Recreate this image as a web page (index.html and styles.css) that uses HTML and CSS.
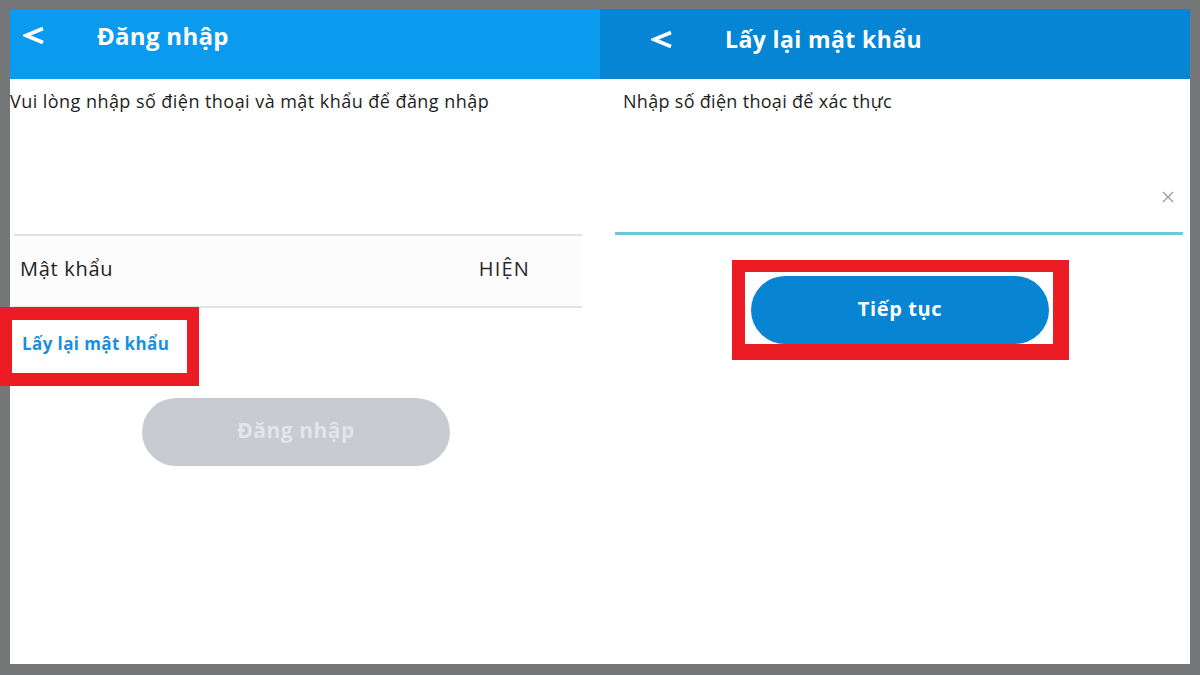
FILE: index.html
```html
<!DOCTYPE html>
<html lang="vi">
<head>
    <meta charset="UTF-8">
    <title>Đăng nhập / Lấy lại mật khẩu</title>
    <link rel="stylesheet" href="styles.css">
</head>
<body>

    <div class="frame">

        <!-- Login screen -->
        <div class="panel">
            <div class="topbar topbar-login">
                <svg class="back" width="22" height="19" viewBox="0 0 22 19">
                    <polyline points="20,2.5 3,9.5 20,16.5" fill="none" stroke="#fff" stroke-width="3.6" stroke-linejoin="miter"/>
                </svg>
                <span class="topbar-title">Đăng nhập</span>
            </div>

            <p class="intro">Vui lòng nhập số điện thoại và mật khẩu để đăng nhập</p>

            <div class="phone-blank"></div>

            <div class="pw-row">
                <span class="pw-label">Mật khẩu</span>
                <span class="pw-show">HIỆN</span>
            </div>

            <div class="mark mark-link">
                <a class="forgot" href="#">Lấy lại mật khẩu</a>
            </div>

            <button class="btn btn-disabled">Đăng nhập</button>
        </div>

        <!-- Recover screen -->
        <div class="panel">
            <div class="topbar topbar-recover">
                <svg class="back" width="22" height="19" viewBox="0 0 22 19">
                    <polyline points="20,2.5 3,9.5 20,16.5" fill="none" stroke="#fff" stroke-width="3.6" stroke-linejoin="miter"/>
                </svg>
                <span class="topbar-title">Lấy lại mật khẩu</span>
            </div>

            <p class="intro intro-recover">Nhập số điện thoại để xác thực</p>

            <div class="phone-field">
                <svg class="clear" width="12" height="12" viewBox="0 0 12 12">
                    <path d="M1 1 L11 11 M11 1 L1 11" stroke="#9a9a9a" stroke-width="1.3" fill="none"/>
                </svg>
            </div>

            <div class="mark mark-btn">
                <button class="btn btn-primary">Tiếp tục</button>
            </div>
        </div>

    </div>

</body>
</html>
```

FILE: styles.css
```css
body {
    margin: 0;
    background-color: #757678;
    font-family: 'Open Sans', 'Liberation Sans', sans-serif;
    height: 675px;
    overflow: hidden;
}

.frame {
    margin: 9px 10px 0 10px;
    width: 1180px;
    height: 655px;
    background: #ffffff;
    display: grid;
    grid-template-columns: 590px 590px;
}

.panel {
    display: flex;
    flex-direction: column;
    align-items: flex-start;
    min-width: 0;
}

.topbar {
    align-self: stretch;
    height: 70px;
    box-sizing: border-box;
    display: flex;
    align-items: center;
    color: #fff;
}

.topbar-login {
    background-color: #0a9bef;
    padding-left: 13px;
    padding-bottom: 18px;
}

.topbar-recover {
    background-color: #0585d3;
    padding-left: 51px;
    padding-bottom: 10px;
}

.topbar-title {
    margin-left: 52px;
    font-weight: 700;
    font-size: 24px;
    letter-spacing: 0.3px;
}

.topbar-recover .topbar-title {
    font-size: 23px;
    letter-spacing: 0.4px;
}

.intro {
    margin: 10px 0 0 0;
    font-size: 18px;
    line-height: 24px;
    letter-spacing: 0.45px;
    color: #1e1e1e;
}

.intro-recover {
    margin-left: 23px;
    letter-spacing: 0.3px;
}

.phone-blank {
    height: 121px;
}

.pw-row {
    align-self: stretch;
    margin: 0 18px 0 4px;
    height: 64px;
    padding: 0 52px 6px 6px;
    border-top: 2px solid #e2e2e2;
    border-bottom: 2px solid #e2e2e2;
    background: #fcfcfc;
    display: flex;
    align-items: center;
    justify-content: space-between;
    font-size: 20px;
    letter-spacing: 0.7px;
    color: #222;
}

.pw-show {
    letter-spacing: 1.2px;
    color: #2a2a2a;
}

.mark {
    border: 0 solid #ec1c24;
    background: #fff;
}

.mark-link {
    margin: -1px 0 0 -10px;
    width: 175px;
    height: 47px;
    padding-bottom: 6px;
    border-width: 13px 12px;
    display: flex;
    align-items: center;
}

.forgot {
    margin-left: 10px;
    color: #1a8fe0;
    font-weight: 700;
    font-size: 17px;
    letter-spacing: 0.4px;
    text-decoration: none;
}

.btn {
    border: none;
    border-radius: 34px;
    font-family: inherit;
    font-weight: 700;
    height: 68px;
    padding-bottom: 5px;
}

.btn-disabled {
    margin: 12px 0 0 132px;
    width: 308px;
    background-color: #c8cbd0;
    color: #e3e5e9;
    font-size: 21px;
    letter-spacing: 0.5px;
}

.phone-field {
    align-self: stretch;
    margin: 0 7px 0 15px;
    height: 122px;
    padding: 0 9px 29px 0;
    box-sizing: border-box;
    border-bottom: 3px solid #6ec6de;
    display: flex;
    justify-content: flex-end;
    align-items: flex-end;
}

.mark-btn {
    margin: 25px 0 0 132px;
    border-width: 12px 16px 16px 13px;
    padding: 4px 4px 0 6px;
    display: flex;
}

.btn-primary {
    width: 298px;
    background-color: #0784d2;
    color: #fff;
    font-size: 20px;
    letter-spacing: 0.6px;
}
```
